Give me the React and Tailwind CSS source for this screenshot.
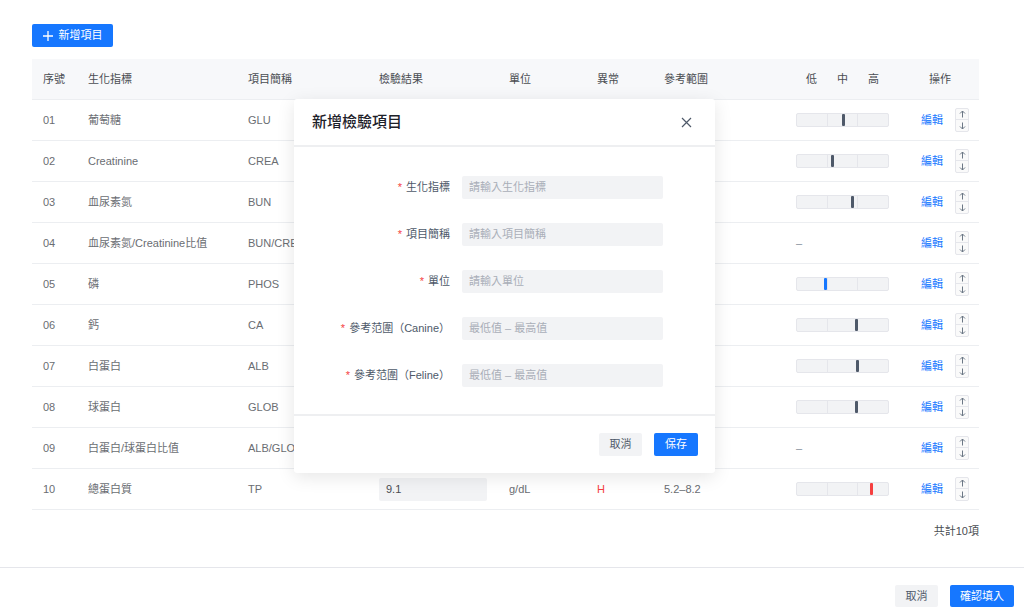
import React from 'react';

const rows = [
  { no: '01', name: '葡萄糖', abbr: 'GLU', value: '95', unit: 'mg/dL', flag: '', range: '74–143', pos: 45, tone: 'normal' },
  { no: '02', name: 'Creatinine', abbr: 'CREA', value: '1.2', unit: 'mg/dL', flag: '', range: '0.5–1.8', pos: 34, tone: 'normal' },
  { no: '03', name: '血尿素氮', abbr: 'BUN', value: '22', unit: 'mg/dL', flag: '', range: '7–27', pos: 54, tone: 'normal' },
  { no: '04', name: '血尿素氮/Creatinine比值', abbr: 'BUN/CREA', value: '18', unit: '', flag: '', range: '', pos: null },
  { no: '05', name: '磷', abbr: 'PHOS', value: '2.6', unit: 'mg/dL', flag: 'L', range: '2.5–6.8', pos: 27, tone: 'low' },
  { no: '06', name: '鈣', abbr: 'CA', value: '10.9', unit: 'mg/dL', flag: '', range: '7.9–12.0', pos: 58, tone: 'normal' },
  { no: '07', name: '白蛋白', abbr: 'ALB', value: '3.8', unit: 'g/dL', flag: '', range: '2.2–3.9', pos: 59, tone: 'normal' },
  { no: '08', name: '球蛋白', abbr: 'GLOB', value: '4.2', unit: 'g/dL', flag: '', range: '2.5–4.5', pos: 58, tone: 'normal' },
  { no: '09', name: '白蛋白/球蛋白比值', abbr: 'ALB/GLOB', value: '0.9', unit: '', flag: '', range: '', pos: null },
  { no: '10', name: '總蛋白質', abbr: 'TP', value: '9.1', unit: 'g/dL', flag: 'H', range: '5.2–8.2', pos: 73, tone: 'high' },
];

const cols = 'grid grid-cols-[45px_160px_131px_130px_88px_67px_132px_125px_69px] items-center';

const markerColor = {
  normal: 'bg-[#4e5969]',
  low: 'bg-[#1677ff]',
  high: 'bg-[#f53f3f]',
};

function RangeBar({ pos, tone }) {
  if (pos === null) {
    return <span className="text-[#86909c]">–</span>;
  }
  return (
    <div className="relative flex h-[14px] w-[93px] rounded-[2px] border border-[#e5e6eb] bg-[#f2f3f5]">
      <div className="flex-1 border-r border-[#e5e6eb]" />
      <div className="flex-1 border-r border-[#e5e6eb]" />
      <div className="flex-1" />
      <div
        className={`absolute top-0 h-[12px] w-[3px] rounded-[1px] ${markerColor[tone]}`}
        style={{ left: pos }}
      />
    </div>
  );
}

function Stepper() {
  return (
    <div className="flex w-[14px] flex-col rounded-[2px] border border-[#e5e6eb] bg-[#fafafa]">
      <div className="flex h-[11px] items-center justify-center border-b border-[#e5e6eb]">
        <svg width="7" height="8" viewBox="0 0 7 8" fill="none" stroke="#6b7785" strokeWidth="1">
          <path d="M3.5 7.5V1M1 3.5l2.5-2.5L6 3.5" />
        </svg>
      </div>
      <div className="flex h-[11px] items-center justify-center">
        <svg width="7" height="8" viewBox="0 0 7 8" fill="none" stroke="#6b7785" strokeWidth="1">
          <path d="M3.5 0.5V7M1 4.5l2.5 2.5L6 4.5" />
        </svg>
      </div>
    </div>
  );
}

function FormRow({ label, placeholder }) {
  return (
    <div className="flex items-center">
      <div className="w-[168px] pr-[12px] text-right text-[#4e5969]">
        <span className="mr-[4px] text-[#f53f3f]">*</span>
        {label}
      </div>
      <div className="flex h-[23px] w-[201px] items-center rounded-[2px] bg-[#f2f3f5] px-[7px] text-[#a9aeb8]">
        {placeholder}
      </div>
    </div>
  );
}

function AddItemModal() {
  return (
    <div className="absolute left-[294px] top-[99px] flex h-[374px] w-[421px] flex-col rounded-[3px] bg-white shadow-[0_4px_18px_rgba(0,0,0,0.10)]">
      <div className="flex h-[48px] items-center justify-between border-b-2 border-[#eeeff1] pl-[18px] pr-[23px]">
        <span className="text-[15px] font-medium text-[#1d2129]">新增檢驗項目</span>
        <svg width="11" height="11" viewBox="0 0 11 11" fill="none" stroke="#4e5969" strokeWidth="1.2">
          <path d="M1 1l9 9M10 1l-9 9" />
        </svg>
      </div>
      <div className="flex flex-1 flex-col gap-[24px] pt-[29px]">
        <FormRow label="生化指標" placeholder="請輸入生化指標" />
        <FormRow label="項目簡稱" placeholder="請輸入項目簡稱" />
        <FormRow label="單位" placeholder="請輸入單位" />
        <FormRow label="參考范圍（Canine）" placeholder="最低值 – 最高值" />
        <FormRow label="參考范圍（Feline）" placeholder="最低值 – 最高值" />
      </div>
      <div className="flex h-[59px] items-start justify-end gap-[12px] border-t-2 border-[#eeeff1] pr-[17px] pt-[17px]">
        <button className="h-[23px] w-[43px] rounded-[2px] bg-[#f2f3f5] text-[#4e5969]">取消</button>
        <button className="h-[23px] w-[44px] rounded-[2px] bg-[#1677ff] text-white">保存</button>
      </div>
    </div>
  );
}

export default function App() {
  return (
    <div className="relative flex h-[614px] w-[1024px] flex-col overflow-hidden bg-white font-['Liberation_Sans','Noto_Sans_CJK_TC',sans-serif] text-[11px]">
      <div className="flex-1 px-[32px] pt-[24px]">
        <button className="flex h-[23px] w-[81px] items-center justify-center gap-[6px] rounded-[2px] bg-[#1677ff] text-white">
          <svg width="10" height="10" viewBox="0 0 10 10" fill="none" stroke="white" strokeWidth="1.3">
            <path d="M5 0v10M0 5h10" />
          </svg>
          新增項目
        </button>

        <div className="mt-[12px] w-[947px]">
          <div className={`${cols} h-[41px] border-b border-[#eceef1] bg-[#f7f8fa] text-[#4a4d52]`}>
            <div className="pl-[11px]">序號</div>
            <div className="pl-[11px]">生化指標</div>
            <div className="pl-[11px]">項目簡稱</div>
            <div className="pl-[11px]">檢驗結果</div>
            <div className="pl-[11px]">單位</div>
            <div className="pl-[11px]">異常</div>
            <div className="pl-[11px]">參考範圍</div>
            <div className="pl-[11px]">
              <div className="grid w-[93px] grid-cols-3 text-center">
                <span>低</span>
                <span>中</span>
                <span>高</span>
              </div>
            </div>
            <div className="pl-[19px]">操作</div>
          </div>

          {rows.map((r) => (
            <div key={r.no} className={`${cols} h-[41px] border-b border-[#eceef1] text-[#6a6d72]`}>
              <div className="pl-[11px]">{r.no}</div>
              <div className="pl-[11px] whitespace-nowrap">{r.name}</div>
              <div className="pl-[11px]">{r.abbr}</div>
              <div className="pl-[11px]">
                <div className="flex h-[23px] w-[108px] items-center rounded-[2px] bg-[#f2f3f5] px-[7px] text-[#4a4d52]">
                  {r.value}
                </div>
              </div>
              <div className="pl-[11px]">{r.unit}</div>
              <div className="pl-[11px]">
                {r.flag && (
                  <span className={r.flag === 'H' ? 'text-[#f53f3f]' : 'text-[#1677ff]'}>{r.flag}</span>
                )}
              </div>
              <div className="pl-[11px]">{r.range}</div>
              <div className="pl-[11px]">
                <RangeBar pos={r.pos} tone={r.tone} />
              </div>
              <div className="flex items-center pl-[11px] gap-[12px]">
                <span className="text-[#1677ff]">編輯</span>
                <Stepper />
              </div>
            </div>
          ))}

          <div className="mt-[13px] text-right text-[#4a4d52]">共計10項</div>
        </div>
      </div>

      <div className="flex h-[47px] items-start justify-end gap-[12px] border-t border-[#e5e6eb] pr-[10px] pt-[17px]">
        <button className="h-[22px] w-[43px] rounded-[2px] bg-[#f2f3f5] text-[#4e5969]">取消</button>
        <button className="h-[22px] w-[64px] rounded-[2px] bg-[#1677ff] text-white">確認填入</button>
      </div>

      <AddItemModal />
    </div>
  );
}
